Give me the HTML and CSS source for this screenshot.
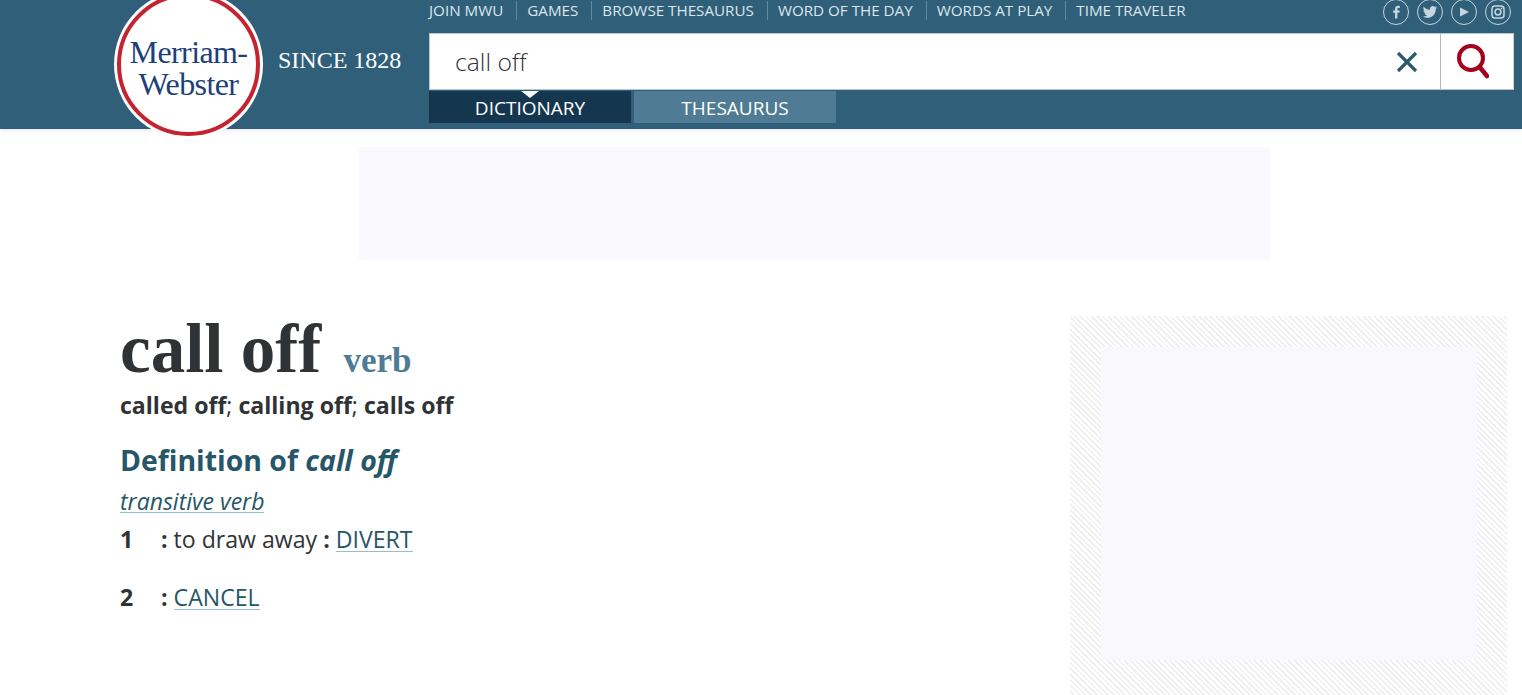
FILE: index.html
```html
<!DOCTYPE html>
<html lang="en">
<head>
<meta charset="utf-8">
<title>call off | Merriam-Webster</title>
<link rel="stylesheet" href="styles.css">
</head>
<body>
<header class="site-header">
  <a class="logo" href="#"><span class="logo-ring"><span class="logo-text">Merriam-<br>Webster</span></span></a>
  <div class="since">SINCE 1828</div>
  <div class="header-main">
    <div class="top-row">
      <nav class="top-nav">
        <a href="#">JOIN MWU</a>
        <a href="#">GAMES</a>
        <a href="#">BROWSE THESAURUS</a>
        <a href="#">WORD OF THE DAY</a>
        <a href="#">WORDS AT PLAY</a>
        <a href="#">TIME TRAVELER</a>
      </nav>
      <div class="social">
        <a class="social-icon" href="#" aria-label="Facebook"><svg viewBox="-2 -2 28 28"><path class="fill" d="M13.6 19.5v-6.6h2.3l.4-2.7h-2.7V8.6c0-.8.3-1.3 1.4-1.3h1.4V4.9c-.3 0-1.1-.1-2-.1-2.1 0-3.5 1.2-3.5 3.5v1.9H8.6v2.7h2.3v6.6z"/></svg></a>
        <a class="social-icon" href="#" aria-label="Twitter"><svg viewBox="-8 -8 40 40"><path class="fill" d="M23.95 4.57a10 10 0 01-2.82.77 4.96 4.96 0 002.16-2.72c-.95.55-2 .96-3.12 1.19a4.92 4.92 0 00-8.38 4.48C7.69 8.1 4.07 6.13 1.64 3.16a4.82 4.82 0 00-.67 2.48c0 1.71.87 3.21 2.19 4.1a4.9 4.9 0 01-2.23-.62v.06a4.92 4.92 0 003.95 4.83 5 5 0 01-2.21.08 4.94 4.94 0 004.6 3.42A9.87 9.87 0 010 19.54a14 14 0 007.56 2.21c9.05 0 14-7.5 14-13.98 0-.21 0-.42-.02-.63a9.94 9.94 0 002.46-2.55z"/></svg></a>
        <a class="social-icon" href="#" aria-label="YouTube"><svg viewBox="0 0 24 24"><path class="fill" d="M8 7.5v9l9-4.5z"/></svg></a>
        <a class="social-icon" href="#" aria-label="Instagram"><svg viewBox="0 0 24 24"><rect class="line" x="6" y="6" width="12" height="12" rx="3"/><circle class="line" cx="12" cy="12" r="2.9"/><circle class="fill" cx="15.6" cy="8.4" r=".8"/></svg></a>
      </div>
    </div>
    <form class="search">
      <div class="search-input">call off</div>
      <button class="clear" type="button" aria-label="Clear"><svg viewBox="0 0 22 22"><path d="M2 2l18 18M20 2L2 20"/></svg></button>
      <button class="go" type="button" aria-label="Search"><svg viewBox="0 0 32 36"><circle cx="14" cy="14" r="12"/><path d="M23 23.5l7 8.5"/></svg></button>
    </form>
    <div class="tabs">
      <a class="tab tab-active" href="#">DICTIONARY</a>
      <a class="tab" href="#">THESAURUS</a>
    </div>
  </div>
</header>

<div class="top-ad"></div>

<main class="content">
  <article class="entry">
    <h1 class="headword">call off <a class="pos" href="#">verb</a></h1>
    <p class="forms"><b>called off</b>; <b>calling off</b>; <b>calls off</b></p>
    <h2 class="def-title">Definition of <em>call off</em></h2>
    <p class="verb-type"><a href="#">transitive verb</a></p>
    <ol class="senses">
      <li class="sense"><span class="num">1</span><span><b>:</b> to draw away <b>:</b> <a href="#">DIVERT</a></span></li>
      <li class="sense"><span class="num">2</span><span><b>:</b> <a href="#">CANCEL</a></span></li>
    </ol>
  </article>
  <aside class="side-ad"><div class="side-ad-inner"></div></aside>
</main>
</body>
</html>
```

FILE: styles.css
```css
* { box-sizing: border-box; }
html, body { margin: 0; padding: 0; height: 695px; overflow: hidden; background: #fff; }
body { font-family: "Open Sans", sans-serif; color: #303336; }
a { color: inherit; text-decoration: none; }

.site-header {
  display: flex;
  height: 129px;
  padding: 0 8px 0 114px;
  background: #305f7a;
  box-shadow: 0 1px 4px rgba(0, 0, 0, .12);
}
.logo {
  flex: none;
  width: 149px;
  height: 149px;
  margin-top: -10px;
  padding: 3px;
  border-radius: 50%;
  background: #fff;
  position: relative;
  z-index: 2;
}
.logo-ring {
  display: flex;
  align-items: center;
  justify-content: center;
  width: 143px;
  height: 143px;
  border: 4px solid #c4232f;
  border-radius: 50%;
  background: #fff;
}
.logo-text {
  font: 32px/32px "Liberation Serif", serif;
  letter-spacing: -.6px;
  color: #1d3f7a;
  text-align: center;
  white-space: nowrap;
  padding-top: 6px;
}
.since {
  flex: none;
  width: 166px;
  padding: 46px 0 0 15px;
  font: 24px/28px "Liberation Serif", serif;
  color: #fff;
  white-space: nowrap;
}
.header-main { flex: 1; min-width: 0; }

.top-row {
  display: flex;
  justify-content: space-between;
  height: 33px;
}
.top-nav { display: flex; align-items: flex-start; padding-top: 1px; }
.top-nav a {
  height: 19px;
  padding: 0 13px 0 10px;
  border-left: 1px solid #5f8aa1;
  font-size: 15.2px;
  font-weight: 500;
  line-height: 19px;
  color: #dbe6ec;
  white-space: nowrap;
}
.top-nav a:first-child { padding-left: 0; border-left: 0; }
.social { display: flex; gap: 8px; padding: 0 3px 0 0; margin-top: -1px; }
.social-icon {
  display: block;
  width: 26px;
  height: 26px;
  border: 1px solid #c6d6df;
  border-radius: 50%;
}
.social-icon svg { display: block; width: 24px; height: 24px; }
.fill { fill: #c6d6df; }
.line { fill: none; stroke: #c6d6df; stroke-width: 1.5; }

.search {
  display: flex;
  height: 57px;
  border: 1px solid #b8c6cf;
  border-right-color: #c9d3da;
  background: #fff;
}
.search-input {
  flex: 1;
  padding-left: 25px;
  font-size: 24.7px;
  font-weight: 300;
  line-height: 55px;
  color: #303336;
}
.search button {
  display: flex;
  align-items: center;
  justify-content: center;
  padding: 0;
  border: 0;
  background: none;
}
.clear { width: 66px; }
.clear svg { width: 22px; height: 22px; }
.clear path { fill: none; stroke: #2d5a6f; stroke-width: 3.2; }
.search .go { width: 73px; padding-right: 8px; border-left: 1px solid #b5b9bc; }
.go svg { width: 32px; height: 36px; }
.go circle, .go path { fill: none; stroke: #a6001f; stroke-width: 4; }
.go path { stroke-linecap: round; stroke-width: 4.6; }

.tabs { display: flex; gap: 3px; margin-top: 1px; }
.tab {
  position: relative;
  width: 202px;
  height: 32px;
  background: #4f7c94;
  font-size: 19px;
  font-weight: 500;
  line-height: 34px;
  color: #fff;
  text-align: center;
}
.tab-active { background: #15364f; }
.tab-active::before {
  content: "";
  position: absolute;
  top: 0;
  left: 92px;
  border: 9px solid transparent;
  border-top: 7px solid #fff;
  border-bottom: 0;
}

.top-ad {
  width: 911px;
  height: 113px;
  margin: 18px 0 0 359px;
  background: #f9f9fd;
}

.content {
  display: flex;
  justify-content: space-between;
  margin-top: 56px;
  padding: 0 15px 0 120px;
}
.headword {
  margin: 0;
  padding-top: 1px;
  font: bold 69px/64px "Liberation Serif", serif;
  color: #303336;
  white-space: nowrap;
}
.pos {
  margin-left: 5px;
  font-size: 35px;
  color: #4f7c94;
}
.forms {
  margin: -4px 0 0;
  font-size: 23.1px;
  line-height: 33px;
  color: #303336;
}
.forms b { font-weight: 700; }
.def-title {
  margin: 20px 0 0;
  font-size: 28.4px;
  line-height: 36px;
  font-weight: 700;
  color: #265667;
}
.def-title em { font-style: italic; }
.verb-type {
  margin: 8px 0 0;
  font-size: 23px;
  font-style: italic;
  line-height: 30px;
  color: #265667;
}
.verb-type a, .sense a {
  color: #265667;
  border-bottom: 1px solid #97bece;
  line-height: 22px;
  display: inline-block;
}
.senses { margin: 7px 0 0; padding: 0; list-style: none; }
.sense {
  display: flex;
  height: 58px;
  font-size: 23.1px;
  line-height: 33px;
  color: #303336;
}
.num { width: 41px; font-weight: 700; }
.sense a { line-height: 24px; }

.side-ad {
  width: 437px;
  height: 379px;
  padding: 31px;
  background: repeating-linear-gradient(45deg, #fff 0 2px, #f1f1f1 2px 4px);
}
.side-ad-inner { width: 376px; height: 313px; background: #f9f9fd; }
```
